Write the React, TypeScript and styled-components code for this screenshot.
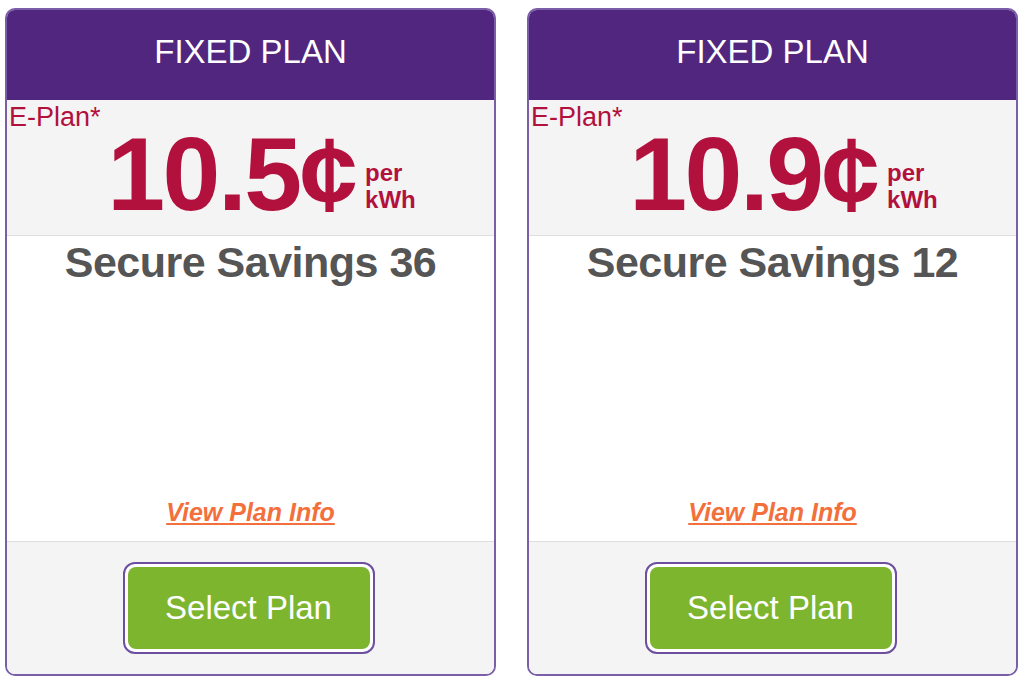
import React from "react";
import styled, { createGlobalStyle } from "styled-components";

interface IPlan {
  type: string;
  label: string;
  price: string;
  name: string;
}

const plans: IPlan[] = [
  { type: "FIXED PLAN", label: "E-Plan*", price: "10.5", name: "Secure Savings 36" },
  { type: "FIXED PLAN", label: "E-Plan*", price: "10.9", name: "Secure Savings 12" },
];

const PlanCard = ({ plan }: { plan: IPlan }) => {
  return (
    <Card>
      <Header>{plan.type}</Header>
      <PriceBox>
        <Label>{plan.label}</Label>
        <PriceRow>
          <Price>{plan.price}¢</Price>
          <Unit>
            <span>per</span>
            <span>kWh</span>
          </Unit>
        </PriceRow>
      </PriceBox>
      <Body>
        <PlanName>{plan.name}</PlanName>
        <InfoLink href="#">View Plan Info</InfoLink>
      </Body>
      <Footer>
        <SelectButton>
          <ButtonFace>Select Plan</ButtonFace>
        </SelectButton>
      </Footer>
    </Card>
  );
};

const App = () => {
  return (
    <>
      <GlobalStyle />
      <Wrapper>
        {plans.map((plan: IPlan, key: number) => (
          <PlanCard key={key} plan={plan} />
        ))}
      </Wrapper>
    </>
  );
};

export default App;

const GlobalStyle = createGlobalStyle`
  body {
    margin: 0;
    background: #fff;
    font-family: "Liberation Sans", Arial, sans-serif;
  }
`;

const Wrapper = styled.div`
  display: flex;
  gap: 31px;
  padding: 8px 5px;
`;

const Card = styled.div`
  width: 491px;
  height: 668px;
  box-sizing: border-box;
  border: 2px solid #7a5ea8;
  border-radius: 10px;
  overflow: hidden;
  display: flex;
  flex-direction: column;
  background: #fff;
`;

const Header = styled.div`
  height: 90px;
  box-sizing: border-box;
  padding-bottom: 6px;
  background: #50267f;
  color: #fff;
  font-size: 33px;
  display: flex;
  align-items: center;
  justify-content: center;
`;

const PriceBox = styled.div`
  height: 136px;
  box-sizing: border-box;
  padding: 4px 2px 0;
  background: #f4f4f4;
  border-bottom: 1px solid #dedede;
  color: #b3113d;
`;

const Label = styled.div`
  font-size: 27px;
  line-height: 27px;
`;

const PriceRow = styled.div`
  display: flex;
  align-items: flex-end;
  justify-content: center;
  padding-left: 22px;
  margin-top: 3px;
`;

const Price = styled.div`
  font-size: 104px;
  line-height: 80px;
  font-weight: bold;
  letter-spacing: -2.5px;
`;

const Unit = styled.div`
  display: flex;
  flex-direction: column;
  font-size: 24px;
  line-height: 27px;
  font-weight: bold;
  margin: 0 0 1px 10px;
`;

const Body = styled.div`
  flex: 1;
  display: flex;
  flex-direction: column;
  align-items: center;
  padding: 5px 0 16px;
`;

const PlanName = styled.div`
  font-size: 43px;
  line-height: 43px;
  font-weight: bold;
  letter-spacing: -0.5px;
  color: #555;
`;

const InfoLink = styled.a`
  margin-top: auto;
  font-size: 25px;
  line-height: 25px;
  font-weight: bold;
  font-style: italic;
  color: #f36f3b;
  text-decoration: underline;
`;

const Footer = styled.div`
  height: 133px;
  box-sizing: border-box;
  border-top: 1px solid #dedede;
  background: #f4f4f4;
  display: flex;
  align-items: center;
  justify-content: center;
  padding: 0 4px 1px 0;
`;

const SelectButton = styled.button`
  width: 252px;
  height: 92px;
  box-sizing: border-box;
  padding: 3px;
  border: 2px solid #6c4f9e;
  border-radius: 12px;
  background: #fff;
  cursor: pointer;
  font-family: inherit;
`;

const ButtonFace = styled.div`
  height: 100%;
  border-radius: 8px;
  background: #7db52f;
  color: #fff;
  font-size: 33px;
  display: flex;
  align-items: center;
  justify-content: center;
`;
